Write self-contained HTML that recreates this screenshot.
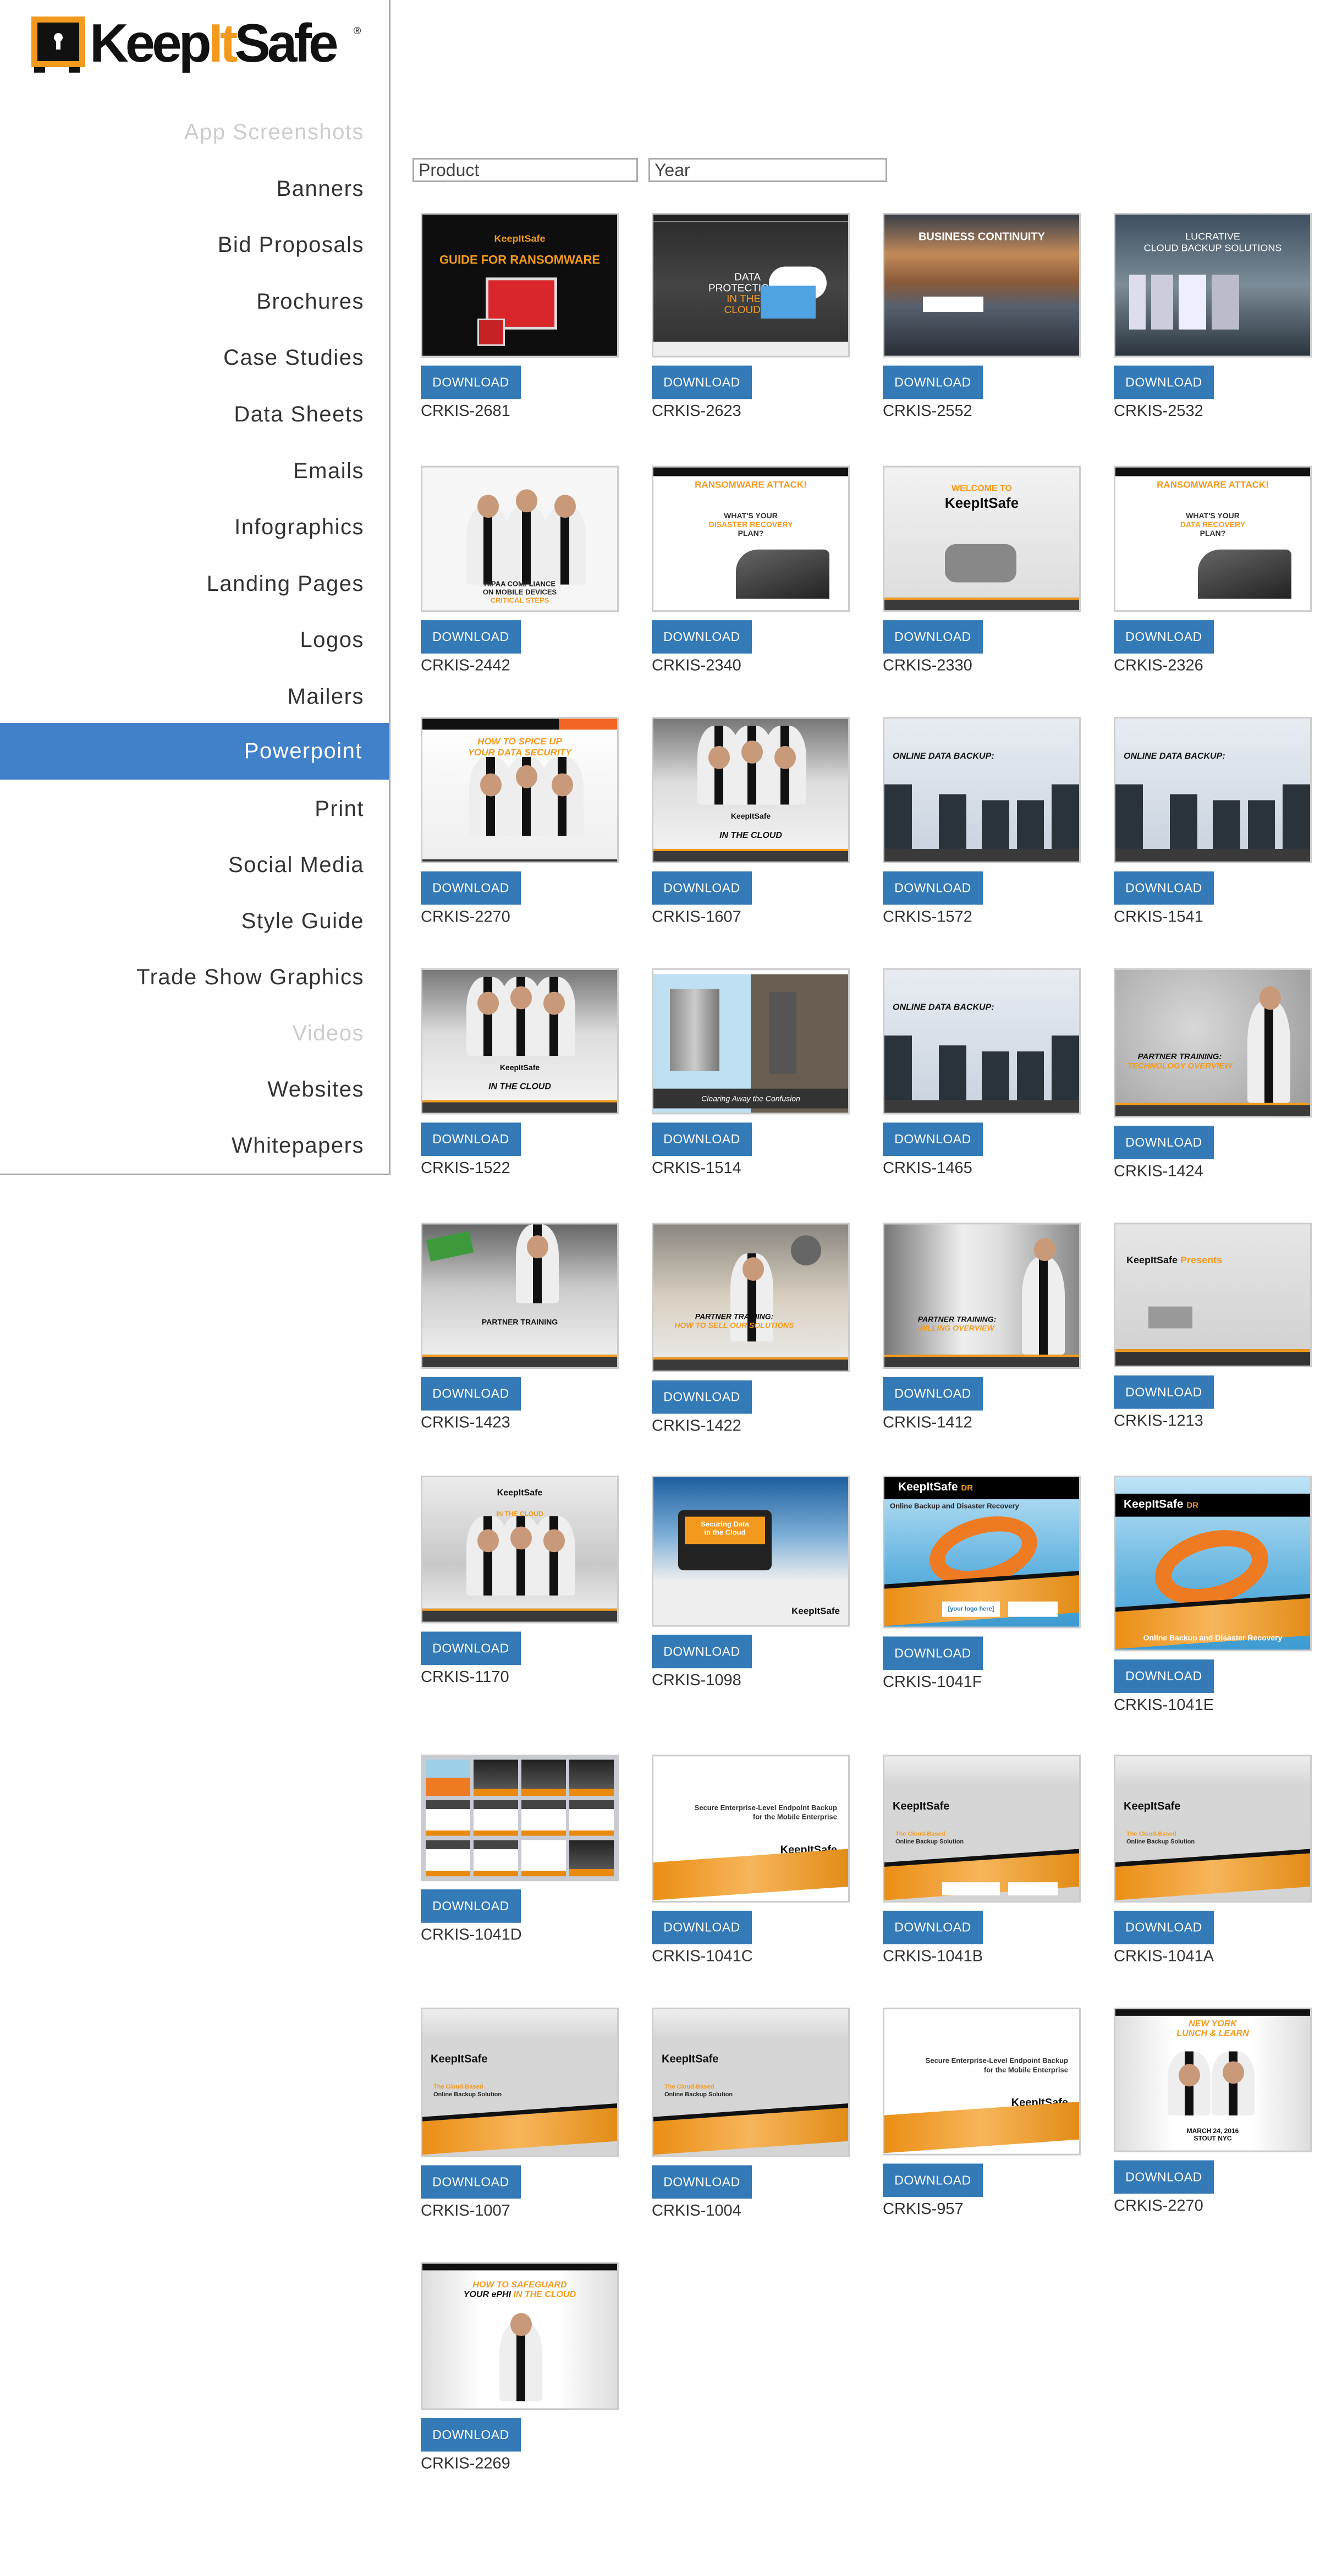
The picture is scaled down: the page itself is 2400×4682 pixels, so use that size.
<!DOCTYPE html>
<html><head><meta charset="utf-8">
<style>
*{margin:0;padding:0;box-sizing:border-box}
html,body{width:2400px;height:4682px;background:#fff;overflow:hidden;position:relative;font-family:"Liberation Sans",sans-serif}
#side{position:absolute;left:0;top:0;width:710px;height:2136px;border-right:3px solid #a8a8a8;border-bottom:3px solid #a8a8a8}
.nav{position:absolute;right:45px;font-size:40px;color:#333;letter-spacing:1.5px;line-height:60px;white-space:nowrap;text-align:right}
.nav.dim{color:#ccc}
#pp{position:absolute;left:0;top:1314px;width:707px;height:103px;background:#4181ca}
.sel{position:absolute;top:1314px;height:103px;line-height:103px;right:48px;font-size:40px;color:#fff;letter-spacing:1.5px}
.inp{position:absolute;top:287px;height:44px;border:3px solid #aaa;font-size:32px;color:#444;padding-left:8px;line-height:38px}
#grid{position:absolute;left:0;top:0;width:2400px;height:4682px;transform:scale(1,0.9948);transform-origin:0 387px}
.t{position:absolute;width:360px;border:3px solid #ccc;overflow:hidden}
.btn{position:absolute;width:182px;height:61px;background:#337ab7;color:#fff;font-size:23px;text-align:center;line-height:61px;letter-spacing:.5px}
.lb{position:absolute;font-size:29px;color:#333}
.ft{position:absolute;left:0;right:0;bottom:0;height:9%;background:#3a3a3a;border-top:4px solid #f39a1e}
.srv{position:absolute;bottom:9%;width:14%;background:#2a323a}
.man{position:absolute;bottom:18%;width:22%;height:55%;background:linear-gradient(90deg,#eee 0 40%,#111 40% 60%,#eee 60%);border-radius:40% 40% 6px 6px}
.head{position:absolute;width:11%;height:16%;background:#c99a7a;border-radius:50%}
.ob{position:absolute;left:-5%;right:-5%;bottom:0;height:24%;background:linear-gradient(90deg,#e98a0e,#f7b55a 50%,#e08810);transform:skewY(-4deg);transform-origin:left bottom;border-top:8px solid #111}
.ttl{position:absolute;left:0;right:0;text-align:center;font-weight:bold;font-size:17px}
</style></head><body>

<div id="side">
<svg style="position:absolute;left:55px;top:28px" width="620" height="110" viewBox="0 0 620 110">
<rect x="2" y="2" width="98" height="92" fill="#f39a1e"/>
<rect x="13" y="13" width="76" height="70" fill="#111"/>
<circle cx="51" cy="40" r="8" fill="#fff"/><rect x="47" y="42" width="8" height="20" fill="#fff"/>
<rect x="7" y="94" width="20" height="10" fill="#111"/><rect x="70" y="94" width="20" height="10" fill="#111"/>
<text x="108" y="84" font-family="Liberation Sans" font-weight="bold" font-size="98" letter-spacing="-6" fill="#111">Keep<tspan fill="#f39a1e">It</tspan>Safe</text>
<text x="588" y="34" font-family="Liberation Sans" font-size="18" fill="#111">®</text>
</svg>
<div class="nav dim" style="top:210px">App Screenshots</div>
<div class="nav" style="top:313px">Banners</div>
<div class="nav" style="top:415px">Bid Proposals</div>
<div class="nav" style="top:518px">Brochures</div>
<div class="nav" style="top:620px">Case Studies</div>
<div class="nav" style="top:723px">Data Sheets</div>
<div class="nav" style="top:826px">Emails</div>
<div class="nav" style="top:928px">Infographics</div>
<div class="nav" style="top:1031px">Landing Pages</div>
<div class="nav" style="top:1133px">Logos</div>
<div class="nav" style="top:1236px">Mailers</div>
<div id="pp"></div><div class="sel">Powerpoint</div>
<div class="nav" style="top:1440px">Print</div>
<div class="nav" style="top:1542px">Social Media</div>
<div class="nav" style="top:1644px">Style Guide</div>
<div class="nav" style="top:1746px">Trade Show Graphics</div>
<div class="nav dim" style="top:1848px">Videos</div>
<div class="nav" style="top:1950px">Websites</div>
<div class="nav" style="top:2052px">Whitepapers</div>
</div>

<div class="inp" style="left:750px;width:410px">Product</div>
<div class="inp" style="left:1179px;width:434px">Year</div>

<div id="grid">
<!-- Row 1 -->
<div class="t" style="left:765px;top:387px;height:264px;background:#0e0e0e">
 <div class="ttl" style="top:34px;color:#f39a1e;font-size:18px">KeepItSafe</div>
 <div class="ttl" style="top:70px;color:#f39a1e;font-size:22px">GUIDE FOR RANSOMWARE</div>
 <div style="position:absolute;left:115px;top:115px;width:130px;height:95px;background:#d8262a;border:5px solid #ddd"></div>
 <div style="position:absolute;left:100px;top:190px;width:50px;height:50px;background:#c52226;border:3px solid #ddd"></div>
</div>
<div class="t" style="left:1185px;top:387px;height:264px;background:linear-gradient(#2a2a2a,#444 50%,#333 90%,#eee 90%)">
 <div style="position:absolute;left:0;right:0;top:0;height:14px;background:#222;border-bottom:2px solid #888"></div>
 <div style="position:absolute;left:100px;top:105px;font-size:19px;color:#fff;text-align:right;width:95px;line-height:20px">DATA<br>PROTECTION<br><span style="color:#f39a1e">IN THE CLOUD</span></div>
 <div style="position:absolute;left:210px;top:95px;width:105px;height:60px;background:#fff;border-radius:30px"></div>
 <div style="position:absolute;left:195px;top:130px;width:100px;height:60px;background:#4fa3e3"></div>
</div>
<div class="t" style="left:1605px;top:387px;height:264px;background:linear-gradient(#3a3f4a 0%,#c28a58 28%,#8a5a3a 48%,#56606e 65%,#2a2e38 100%)">
 <div class="ttl" style="top:30px;color:#fff;font-size:20px">BUSINESS CONTINUITY</div>
 <div style="position:absolute;left:70px;top:150px;width:110px;height:28px;background:#fff"></div>
</div>
<div class="t" style="left:2025px;top:387px;height:264px;background:linear-gradient(#3d4f60,#7c8c98 50%,#2a343e)">
 <div class="ttl" style="top:30px;color:#fff;font-size:18px;font-weight:normal">LUCRATIVE<br>CLOUD BACKUP SOLUTIONS</div>
 <div style="position:absolute;left:25px;top:110px;width:200px;height:100px;background:linear-gradient(90deg,#dde 0 15%,transparent 15% 20%,#ccd 20% 40%,transparent 40% 45%,#eef 45% 70%,transparent 70% 75%,#bbc 75%)"></div>
</div>
<div class="btn" style="left:765px;top:666px">DOWNLOAD</div><div class="lb" style="left:765px;top:733px">CRKIS-2681</div>
<div class="btn" style="left:1185px;top:666px">DOWNLOAD</div><div class="lb" style="left:1185px;top:733px">CRKIS-2623</div>
<div class="btn" style="left:1605px;top:666px">DOWNLOAD</div><div class="lb" style="left:1605px;top:733px">CRKIS-2552</div>
<div class="btn" style="left:2025px;top:666px">DOWNLOAD</div><div class="lb" style="left:2025px;top:733px">CRKIS-2532</div>

<!-- Row 2 -->
<div class="t" style="left:765px;top:849px;height:267px;background:#f6f6f6">
 <div class="man" style="left:80px"></div><div class="head" style="left:100px;top:50px"></div>
 <div class="man" style="left:150px"></div><div class="head" style="left:170px;top:40px"></div>
 <div class="man" style="left:220px"></div><div class="head" style="left:240px;top:50px"></div>
 <div class="ttl" style="top:205px;color:#222;font-size:13px">HIPAA COMPLIANCE<br>ON MOBILE DEVICES<br><span style="color:#f39a1e">CRITICAL STEPS</span></div>
</div>
<div class="t" style="left:1185px;top:849px;height:267px;background:#fff">
 <div style="position:absolute;left:0;right:0;top:0;height:16px;background:#111"></div>
 <div class="ttl" style="top:22px;color:#f39a1e">RANSOMWARE ATTACK!</div>
 <div class="ttl" style="top:80px;color:#333;font-size:14px">WHAT'S YOUR<br><span style="color:#f39a1e">DISASTER RECOVERY</span><br>PLAN?</div>
 <div style="position:absolute;left:150px;top:150px;width:170px;height:90px;background:linear-gradient(160deg,#666,#222);border-radius:40px 10px 0 0"></div>
</div>
<div class="t" style="left:1605px;top:849px;height:267px;background:linear-gradient(#f2f2f2,#dcdcdc)">
 <div class="ttl" style="top:30px;color:#f39a1e;font-size:16px">WELCOME TO</div>
 <div class="ttl" style="top:50px;color:#111;font-size:26px">KeepItSafe</div>
 <div style="position:absolute;left:110px;top:140px;width:130px;height:70px;background:#888;border-radius:20px"></div>
 <div class="ft"></div>
</div>
<div class="t" style="left:2025px;top:849px;height:267px;background:#fff">
 <div style="position:absolute;left:0;right:0;top:0;height:16px;background:#111"></div>
 <div class="ttl" style="top:22px;color:#f39a1e">RANSOMWARE ATTACK!</div>
 <div class="ttl" style="top:80px;color:#333;font-size:14px">WHAT'S YOUR<br><span style="color:#f39a1e">DATA RECOVERY</span><br>PLAN?</div>
 <div style="position:absolute;left:150px;top:150px;width:170px;height:90px;background:linear-gradient(160deg,#666,#222);border-radius:40px 10px 0 0"></div>
</div>
<div class="btn" style="left:765px;top:1131px">DOWNLOAD</div><div class="lb" style="left:765px;top:1198px">CRKIS-2442</div>
<div class="btn" style="left:1185px;top:1131px">DOWNLOAD</div><div class="lb" style="left:1185px;top:1198px">CRKIS-2340</div>
<div class="btn" style="left:1605px;top:1131px">DOWNLOAD</div><div class="lb" style="left:1605px;top:1198px">CRKIS-2330</div>
<div class="btn" style="left:2025px;top:1131px">DOWNLOAD</div><div class="lb" style="left:2025px;top:1198px">CRKIS-2326</div>

<!-- Row 3 -->
<div class="t" style="left:765px;top:1308px;height:267px;background:linear-gradient(#fff,#eee)">
 <div style="position:absolute;left:0;right:0;top:0;height:20px;background:linear-gradient(90deg,#111 70%,#f26522 70%)"></div>
 <div class="ttl" style="top:32px;color:#f39a1e;font-style:italic">HOW TO SPICE UP<br>YOUR DATA SECURITY</div>
 <div class="man" style="left:85px"></div><div class="head" style="left:105px;top:100px"></div>
 <div class="man" style="left:150px"></div><div class="head" style="left:170px;top:85px"></div>
 <div class="man" style="left:215px"></div><div class="head" style="left:235px;top:100px"></div>
 <div style="position:absolute;left:0;right:0;bottom:0;height:4px;background:#333"></div>
</div>
<div class="t" style="left:1185px;top:1308px;height:267px;background:linear-gradient(#777,#ddd 45%,#f6f6f6)">
 <div class="man" style="left:80px;bottom:40%"></div><div class="head" style="left:100px;top:50px"></div>
 <div class="man" style="left:140px;bottom:40%"></div><div class="head" style="left:160px;top:40px"></div>
 <div class="man" style="left:200px;bottom:40%"></div><div class="head" style="left:220px;top:50px"></div>
 <div class="ttl" style="top:170px;color:#111;font-size:14px">KeepItSafe</div>
 <div class="ttl" style="top:205px;color:#111;font-size:16px;font-style:italic">IN THE CLOUD</div>
 <div class="ft"></div>
</div>
<div class="t" style="left:1605px;top:1308px;height:267px;background:linear-gradient(#e8ecf2,#c8d2de)">
 <div style="position:absolute;left:15px;top:60px;font-size:16px;font-weight:bold;font-style:italic;color:#111">ONLINE DATA BACKUP:</div>
 <div class="srv" style="left:0;height:45%"></div><div class="srv" style="left:28%;height:38%"></div><div class="srv" style="left:50%;height:34%"></div><div class="srv" style="left:68%;height:34%"></div><div class="srv" style="left:86%;height:45%"></div>
 <div class="ft" style="border-top:0"></div>
</div>
<div class="t" style="left:2025px;top:1308px;height:267px;background:linear-gradient(#e8ecf2,#c8d2de)">
 <div style="position:absolute;left:15px;top:60px;font-size:16px;font-weight:bold;font-style:italic;color:#111">ONLINE DATA BACKUP:</div>
 <div class="srv" style="left:0;height:45%"></div><div class="srv" style="left:28%;height:38%"></div><div class="srv" style="left:50%;height:34%"></div><div class="srv" style="left:68%;height:34%"></div><div class="srv" style="left:86%;height:45%"></div>
 <div class="ft" style="border-top:0"></div>
</div>
<div class="btn" style="left:765px;top:1590px">DOWNLOAD</div><div class="lb" style="left:765px;top:1657px">CRKIS-2270</div>
<div class="btn" style="left:1185px;top:1590px">DOWNLOAD</div><div class="lb" style="left:1185px;top:1657px">CRKIS-1607</div>
<div class="btn" style="left:1605px;top:1590px">DOWNLOAD</div><div class="lb" style="left:1605px;top:1657px">CRKIS-1572</div>
<div class="btn" style="left:2025px;top:1590px">DOWNLOAD</div><div class="lb" style="left:2025px;top:1657px">CRKIS-1541</div>

<!-- Row 4 -->
<div class="t" style="left:765px;top:1767px;height:267px;background:linear-gradient(#777,#ddd 45%,#f6f6f6)">
 <div class="man" style="left:80px;bottom:40%"></div><div class="head" style="left:100px;top:40px"></div>
 <div class="man" style="left:140px;bottom:40%"></div><div class="head" style="left:160px;top:30px"></div>
 <div class="man" style="left:200px;bottom:40%"></div><div class="head" style="left:220px;top:40px"></div>
 <div class="ttl" style="top:170px;color:#111;font-size:14px">KeepItSafe</div>
 <div class="ttl" style="top:205px;color:#111;font-size:16px;font-style:italic">IN THE CLOUD</div>
 <div class="ft"></div>
</div>
<div class="t" style="left:1185px;top:1767px;height:267px;background:linear-gradient(90deg,#bfe0f3 50%,#6a5e52 50%)">
 <div style="position:absolute;left:0;right:0;top:0;height:8px;background:#fff"></div>
 <div style="position:absolute;left:30px;top:35px;width:90px;height:150px;background:linear-gradient(90deg,#888,#ccc,#777)"></div>
 <div style="position:absolute;left:210px;top:40px;width:50px;height:150px;background:#555"></div>
 <div style="position:absolute;left:0;right:0;bottom:8px;height:36px;background:#333;color:#fff;font-size:14px;font-style:italic;text-align:center;line-height:36px">Clearing Away the Confusion</div>
</div>
<div class="t" style="left:1605px;top:1767px;height:267px;background:linear-gradient(#e8ecf2,#c8d2de)">
 <div style="position:absolute;left:15px;top:60px;font-size:16px;font-weight:bold;font-style:italic;color:#111">ONLINE DATA BACKUP:</div>
 <div class="srv" style="left:0;height:45%"></div><div class="srv" style="left:28%;height:38%"></div><div class="srv" style="left:50%;height:34%"></div><div class="srv" style="left:68%;height:34%"></div><div class="srv" style="left:86%;height:45%"></div>
 <div class="ft" style="border-top:0"></div>
</div>
<div class="t" style="left:2025px;top:1767px;height:273px;background:radial-gradient(circle at 40% 40%,#d8d8d8,#999)">
 <div class="man" style="left:240px;height:70%;bottom:9%"></div><div class="head" style="left:262px;top:30px"></div>
 <div class="ttl" style="top:150px;left:-120px;color:#111;font-size:15px;font-style:italic">PARTNER TRAINING:<br><span style="color:#f39a1e">TECHNOLOGY OVERVIEW</span></div>
 <div class="ft"></div>
</div>
<div class="btn" style="left:765px;top:2049px">DOWNLOAD</div><div class="lb" style="left:765px;top:2116px">CRKIS-1522</div>
<div class="btn" style="left:1185px;top:2049px">DOWNLOAD</div><div class="lb" style="left:1185px;top:2116px">CRKIS-1514</div>
<div class="btn" style="left:1605px;top:2049px">DOWNLOAD</div><div class="lb" style="left:1605px;top:2116px">CRKIS-1465</div>
<div class="btn" style="left:2025px;top:2055px">DOWNLOAD</div><div class="lb" style="left:2025px;top:2122px">CRKIS-1424</div>

<!-- Row 5 -->
<div class="t" style="left:765px;top:2232px;height:267px;background:linear-gradient(#666,#ccc 45%,#f4f4f4)">
 <div style="position:absolute;left:10px;top:20px;width:80px;height:40px;background:#3c9a3c;transform:rotate(-12deg)"></div>
 <div class="man" style="left:170px;bottom:45%"></div><div class="head" style="left:190px;top:20px"></div>
 <div class="ttl" style="top:170px;color:#111;font-size:14px">PARTNER TRAINING</div>
 <div class="ft"></div>
</div>
<div class="t" style="left:1185px;top:2232px;height:273px;background:linear-gradient(#8a8680,#d8cfc0 50%,#eee)">
 <div class="man" style="left:140px;height:60%;bottom:20%"></div><div class="head" style="left:162px;top:60px"></div>
 <div style="position:absolute;left:250px;top:20px;width:55px;height:55px;border-radius:50%;background:#666"></div>
 <div class="ttl" style="top:160px;left:-60px;color:#111;font-size:14px;font-style:italic">PARTNER TRAINING:<br><span style="color:#f39a1e">HOW TO SELL OUR SOLUTIONS</span></div>
 <div class="ft"></div>
</div>
<div class="t" style="left:1605px;top:2232px;height:267px;background:linear-gradient(90deg,#777,#eee 40%,#ddd 60%,#888)">
 <div class="man" style="left:250px;height:68%;bottom:9%"></div><div class="head" style="left:272px;top:25px"></div>
 <div class="ttl" style="top:165px;left:-90px;color:#111;font-size:14px;font-style:italic">PARTNER TRAINING:<br><span style="color:#f39a1e">BILLING OVERVIEW</span></div>
 <div class="ft"></div>
</div>
<div class="t" style="left:2025px;top:2232px;height:264px;background:linear-gradient(#e6e6e6,#d0d0d0)">
 <div style="position:absolute;left:20px;top:55px;font-size:18px;font-weight:bold;color:#111">KeepItSafe <span style="color:#f39a1e">Presents</span></div>
 <div style="position:absolute;left:60px;top:150px;width:80px;height:40px;background:#999"></div>
 <div style="position:absolute;left:0;right:0;bottom:0;height:30px;background:#333;border-top:5px solid #f39a1e"></div>
</div>
<div class="btn" style="left:765px;top:2514px">DOWNLOAD</div><div class="lb" style="left:765px;top:2581px">CRKIS-1423</div>
<div class="btn" style="left:1185px;top:2520px">DOWNLOAD</div><div class="lb" style="left:1185px;top:2587px">CRKIS-1422</div>
<div class="btn" style="left:1605px;top:2514px">DOWNLOAD</div><div class="lb" style="left:1605px;top:2581px">CRKIS-1412</div>
<div class="btn" style="left:2025px;top:2511px">DOWNLOAD</div><div class="lb" style="left:2025px;top:2578px">CRKIS-1213</div>

<!-- Row 6 -->
<div class="t" style="left:765px;top:2694px;height:270px;background:linear-gradient(#ececec,#c8c8c8 60%,#f2f2f2)">
 <div class="ttl" style="top:20px;color:#111;font-size:16px">KeepItSafe</div>
 <div class="ttl" style="top:60px;color:#f39a1e;font-size:12px">IN THE CLOUD</div>
 <div class="man" style="left:80px"></div><div class="head" style="left:100px;top:95px"></div>
 <div class="man" style="left:140px"></div><div class="head" style="left:160px;top:90px"></div>
 <div class="man" style="left:200px"></div><div class="head" style="left:220px;top:95px"></div>
 <div class="ft"></div>
</div>
<div class="t" style="left:1185px;top:2694px;height:276px;background:linear-gradient(#1d5fa0,#7fb0d8 40%,#eee 70%)">
 <div style="position:absolute;left:45px;top:60px;width:170px;height:110px;background:#222;border-radius:10px;padding:12px">
  <div style="background:#f39a1e;height:50px;color:#fff;font-size:13px;font-weight:bold;text-align:center;padding-top:6px">Securing Data<br>in the Cloud</div></div>
 <div style="position:absolute;right:15px;bottom:15px;font-size:17px;font-weight:bold;color:#111">KeepItSafe</div>
</div>
<div class="t" style="left:1605px;top:2694px;height:279px;background:linear-gradient(#bfe3f6,#65b4e0 60%,#3d9ad0)">
 <div style="position:absolute;left:0;right:0;top:0;height:40px;background:#000;color:#fff;font-size:21px;font-weight:bold;padding:6px 0 0 25px">KeepItSafe <span style="color:#f39a1e;font-size:15px">DR</span></div>
 <div style="position:absolute;left:10px;top:45px;font-size:13px;font-weight:bold;color:#222">Online Backup and Disaster Recovery</div>
 <div style="position:absolute;left:80px;top:75px;width:200px;height:120px;border:28px solid #ee7a22;border-radius:50%;transform:rotate(-15deg)"></div>
 <div class="ob" style="height:28%"></div>
 <div style="position:absolute;left:105px;bottom:18px;width:105px;height:28px;background:#fff;color:#1a6ec0;font-size:11px;font-weight:bold;text-align:center;line-height:28px">[your logo here]</div>
 <div style="position:absolute;left:225px;bottom:18px;width:90px;height:28px;background:#fff"></div>
</div>
<div class="t" style="left:2025px;top:2694px;height:321px;background:linear-gradient(#bfe3f6,#65b4e0 60%,#3d9ad0)">
 <div style="position:absolute;left:0;right:0;top:30px;height:42px;background:#000;color:#fff;font-size:21px;font-weight:bold;padding:8px 0 0 15px">KeepItSafe <span style="color:#f39a1e;font-size:15px">DR</span></div>
 <div style="position:absolute;left:70px;top:100px;width:210px;height:130px;border:30px solid #ee7a22;border-radius:50%;transform:rotate(-15deg)"></div>
 <div class="ob" style="height:24%"></div>
 <div style="position:absolute;left:0;right:0;bottom:14px;color:#fff;font-size:14px;font-weight:bold;text-align:center">Online Backup and Disaster Recovery</div>
</div>
<div class="btn" style="left:765px;top:2979px">DOWNLOAD</div><div class="lb" style="left:765px;top:3046px">CRKIS-1170</div>
<div class="btn" style="left:1185px;top:2985px">DOWNLOAD</div><div class="lb" style="left:1185px;top:3052px">CRKIS-1098</div>
<div class="btn" style="left:1605px;top:2988px">DOWNLOAD</div><div class="lb" style="left:1605px;top:3055px">CRKIS-1041F</div>
<div class="btn" style="left:2025px;top:3030px">DOWNLOAD</div><div class="lb" style="left:2025px;top:3097px">CRKIS-1041E</div>

<!-- Row 7 -->
<div class="t" style="left:765px;top:3204px;height:231px;background:#c8ccd2;padding:6px">
 <div style="display:grid;grid-template-columns:repeat(4,1fr);grid-gap:8px 6px;height:100%">
  <div style="background:linear-gradient(#9fd0ea 50%,#ee7a22 50%)"></div><div style="background:linear-gradient(#222,#555 80%,#e98a0e 80%)"></div><div style="background:linear-gradient(#222,#555 80%,#e98a0e 80%)"></div><div style="background:linear-gradient(#222,#555 80%,#e98a0e 80%)"></div>
  <div style="background:linear-gradient(#444 25%,#fff 25% 85%,#e98a0e 85%)"></div><div style="background:linear-gradient(#444 25%,#fff 25% 85%,#e98a0e 85%)"></div><div style="background:linear-gradient(#444 25%,#fff 25% 85%,#e98a0e 85%)"></div><div style="background:linear-gradient(#444 25%,#fff 25% 85%,#e98a0e 85%)"></div>
  <div style="background:linear-gradient(#444 25%,#fff 25% 85%,#e98a0e 85%)"></div><div style="background:linear-gradient(#444 25%,#fff 25% 85%,#e98a0e 85%)"></div><div style="background:linear-gradient(#fff 85%,#e98a0e 85%)"></div><div style="background:linear-gradient(#222,#555 80%,#e98a0e 80%)"></div>
 </div>
</div>
<div class="t" style="left:1185px;top:3204px;height:270px;background:#fff">
 <div style="position:absolute;right:20px;top:85px;font-size:13px;font-weight:bold;color:#333;text-align:right;line-height:17px">Secure Enterprise-Level Endpoint Backup<br>for the Mobile Enterprise</div>
 <div style="position:absolute;right:20px;top:160px;font-size:20px;font-weight:bold;color:#111">KeepItSafe</div>
 <div class="ob" style="height:26%;border-top:none"></div>
</div>
<div class="t" style="left:1605px;top:3204px;height:270px;background:linear-gradient(#eee,#d6d6d6 20%,#d4d4d4)">
 <div style="position:absolute;left:15px;top:80px;font-size:20px;font-weight:bold;color:#111">KeepItSafe</div>
 <div style="position:absolute;left:20px;top:135px;font-size:11px;font-weight:bold;color:#f39a1e;line-height:14px">The Cloud-Based<br><span style="color:#222">Online Backup Solution</span></div>
 <div class="ob" style="height:26%"></div>
 <div style="position:absolute;left:105px;bottom:10px;width:105px;height:24px;background:#fff"></div><div style="position:absolute;left:225px;bottom:10px;width:90px;height:24px;background:#fff"></div>
</div>
<div class="t" style="left:2025px;top:3204px;height:270px;background:linear-gradient(#eee,#d6d6d6 20%,#d4d4d4)">
 <div style="position:absolute;left:15px;top:80px;font-size:20px;font-weight:bold;color:#111">KeepItSafe</div>
 <div style="position:absolute;left:20px;top:135px;font-size:11px;font-weight:bold;color:#f39a1e;line-height:14px">The Cloud-Based<br><span style="color:#222">Online Backup Solution</span></div>
 <div class="ob" style="height:26%"></div>
</div>
<div class="btn" style="left:765px;top:3450px">DOWNLOAD</div><div class="lb" style="left:765px;top:3517px">CRKIS-1041D</div>
<div class="btn" style="left:1185px;top:3489px">DOWNLOAD</div><div class="lb" style="left:1185px;top:3556px">CRKIS-1041C</div>
<div class="btn" style="left:1605px;top:3489px">DOWNLOAD</div><div class="lb" style="left:1605px;top:3556px">CRKIS-1041B</div>
<div class="btn" style="left:2025px;top:3489px">DOWNLOAD</div><div class="lb" style="left:2025px;top:3556px">CRKIS-1041A</div>

<!-- Row 8 -->
<div class="t" style="left:765px;top:3666px;height:273px;background:linear-gradient(#eee,#d6d6d6 20%,#d4d4d4)">
 <div style="position:absolute;left:15px;top:80px;font-size:20px;font-weight:bold;color:#111">KeepItSafe</div>
 <div style="position:absolute;left:20px;top:135px;font-size:11px;font-weight:bold;color:#f39a1e;line-height:14px">The Cloud-Based<br><span style="color:#222">Online Backup Solution</span></div>
 <div class="ob" style="height:26%"></div>
</div>
<div class="t" style="left:1185px;top:3666px;height:273px;background:linear-gradient(#eee,#d6d6d6 20%,#d4d4d4)">
 <div style="position:absolute;left:15px;top:80px;font-size:20px;font-weight:bold;color:#111">KeepItSafe</div>
 <div style="position:absolute;left:20px;top:135px;font-size:11px;font-weight:bold;color:#f39a1e;line-height:14px">The Cloud-Based<br><span style="color:#222">Online Backup Solution</span></div>
 <div class="ob" style="height:26%"></div>
</div>
<div class="t" style="left:1605px;top:3666px;height:270px;background:#fff">
 <div style="position:absolute;right:20px;top:85px;font-size:13px;font-weight:bold;color:#333;text-align:right;line-height:17px">Secure Enterprise-Level Endpoint Backup<br>for the Mobile Enterprise</div>
 <div style="position:absolute;right:20px;top:160px;font-size:20px;font-weight:bold;color:#111">KeepItSafe</div>
 <div class="ob" style="height:26%;border-top:none"></div>
</div>
<div class="t" style="left:2025px;top:3666px;height:264px;background:linear-gradient(90deg,#ddd,#fff 30%,#fff 70%,#ddd)">
 <div style="position:absolute;left:0;right:0;top:0;height:12px;background:#111"></div>
 <div class="ttl" style="top:18px;color:#f39a1e;font-style:italic;font-size:16px">NEW YORK<br>LUNCH &amp; LEARN</div>
 <div class="man" style="left:95px;bottom:25%;height:45%"></div><div class="head" style="left:115px;top:100px"></div>
 <div class="man" style="left:175px;bottom:25%;height:45%"></div><div class="head" style="left:195px;top:95px"></div>
 <div class="ttl" style="top:215px;color:#111;font-size:12px">MARCH 24, 2016<br>STOUT NYC</div>
</div>
<div class="btn" style="left:765px;top:3954px">DOWNLOAD</div><div class="lb" style="left:765px;top:4021px">CRKIS-1007</div>
<div class="btn" style="left:1185px;top:3954px">DOWNLOAD</div><div class="lb" style="left:1185px;top:4021px">CRKIS-1004</div>
<div class="btn" style="left:1605px;top:3951px">DOWNLOAD</div><div class="lb" style="left:1605px;top:4018px">CRKIS-957</div>
<div class="btn" style="left:2025px;top:3945px">DOWNLOAD</div><div class="lb" style="left:2025px;top:4012px">CRKIS-2270</div>

<!-- Row 9 -->
<div class="t" style="left:765px;top:4131px;height:270px;background:linear-gradient(90deg,#ddd,#fff 30%,#fff 70%,#ddd)">
 <div style="position:absolute;left:0;right:0;top:0;height:12px;background:#111"></div>
 <div class="ttl" style="top:30px;color:#f39a1e;font-style:italic;font-size:16px">HOW TO SAFEGUARD<br><span style="color:#111">YOUR ePHI</span> IN THE CLOUD</div>
 <div class="man" style="left:140px;bottom:5%;height:55%"></div><div class="head" style="left:160px;top:90px"></div>
</div>
<div class="btn" style="left:765px;top:4416px">DOWNLOAD</div><div class="lb" style="left:765px;top:4483px">CRKIS-2269</div>
</div>

</body></html>
